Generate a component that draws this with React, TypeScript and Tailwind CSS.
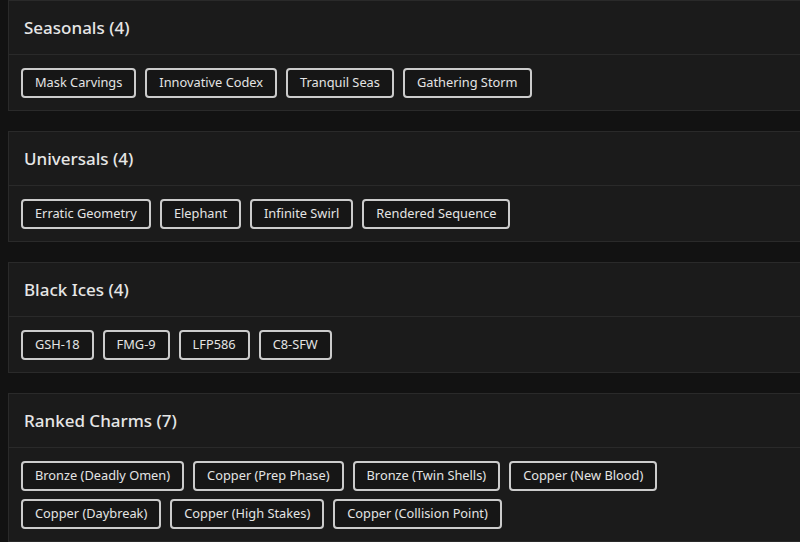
import React from "react";

const sections: { title: string; items: string[] }[] = [
  { title: "Seasonals (4)", items: ["Mask Carvings", "Innovative Codex", "Tranquil Seas", "Gathering Storm"] },
  { title: "Universals (4)", items: ["Erratic Geometry", "Elephant", "Infinite Swirl", "Rendered Sequence"] },
  { title: "Black Ices (4)", items: ["GSH-18", "FMG-9", "LFP586", "C8-SFW"] },
  {
    title: "Ranked Charms (7)",
    items: [
      "Bronze (Deadly Omen)",
      "Copper (Prep Phase)",
      "Bronze (Twin Shells)",
      "Copper (New Blood)",
      "Copper (Daybreak)",
      "Copper (High Stakes)",
      "Copper (Collision Point)",
    ],
  },
];

export default function App() {
  return (
    <div
      className="min-h-[542px] w-[800px] overflow-hidden bg-[#121212] pl-2"
      style={{ fontFamily: "'Noto Sans', 'Open Sans', sans-serif" }}
    >
      <div className="flex w-[800px] flex-col gap-[20px]">
        {sections.map((s) => (
          <div key={s.title} className="border border-[#2a2a2a] bg-[#1b1b1b]">
            <div className="flex h-[54px] items-center border-b border-[#2a2a2a] pl-[15px] text-[17px] font-medium text-[#e6e6e6]">
              {s.title}
            </div>
            <div className="flex flex-wrap gap-x-[9px] gap-y-2 px-3 pt-[13px] pb-[12px]">
              {s.items.map((it) => (
                <div
                  key={it}
                  className="flex h-[30px] items-center rounded-[4px] border-2 border-[#cccccc] bg-[#161616] px-3 text-[12.8px] text-[#e4e4e4]"
                >
                  {it}
                </div>
              ))}
            </div>
          </div>
        ))}
      </div>
    </div>
  );
}
